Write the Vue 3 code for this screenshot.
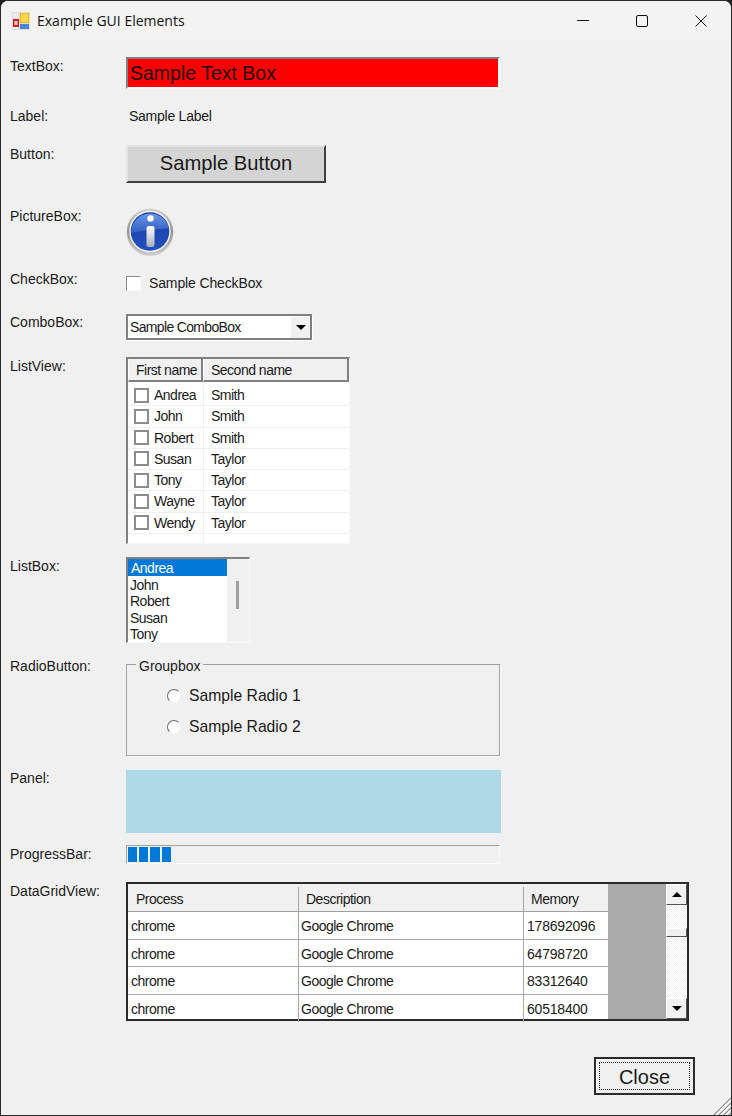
<script setup>
const people = [
  { first: 'Andrea', second: 'Smith' },
  { first: 'John', second: 'Smith' },
  { first: 'Robert', second: 'Smith' },
  { first: 'Susan', second: 'Taylor' },
  { first: 'Tony', second: 'Taylor' },
  { first: 'Wayne', second: 'Taylor' },
  { first: 'Wendy', second: 'Taylor' },
]
const listItems = people.slice(0, 5).map(p => p.first)
const processes = [
  { name: 'chrome', desc: 'Google Chrome', mem: 178692096 },
  { name: 'chrome', desc: 'Google Chrome', mem: 64798720 },
  { name: 'chrome', desc: 'Google Chrome', mem: 83312640 },
  { name: 'chrome', desc: 'Google Chrome', mem: 60518400 },
]
const progressBlocks = 4
</script>

<template>
  <div class="window">
    <header class="titlebar">
      <svg class="app-icon" width="18" height="18" viewBox="0 0 18 18">
        <rect width="18" height="18" fill="#dcdcdc" />
        <rect x="1" y="1" width="5" height="5" fill="#ececec" />
        <rect x="1" y="15" width="5" height="2" fill="#f4f4f4" />
        <rect x="1" y="7" width="6" height="8" fill="#d42020" />
        <rect x="2.5" y="9" width="3" height="4" fill="#f6d0c8" />
        <rect x="8" y="1" width="9" height="10" fill="#f2b705" />
        <rect x="9" y="2" width="7" height="8" fill="#ffd84a" />
        <rect x="8" y="12" width="9" height="5" fill="#4a86d8" />
      </svg>
      <span class="title">Example GUI Elements</span>
      <div class="caption-btns">
        <svg width="14" height="14" viewBox="0 0 14 14"><path d="M1 6.5h12" stroke="#111" fill="none" /></svg>
        <svg width="14" height="14" viewBox="0 0 14 14"><rect x="1.5" y="1.5" width="11" height="11" rx="1.5" stroke="#111" fill="none" /></svg>
        <svg width="14" height="14" viewBox="0 0 14 14"><path d="M1.5 1.5l11 11M12.5 1.5l-11 11" stroke="#111" fill="none" /></svg>
      </div>
    </header>

    <main class="form">
      <div class="row r-textbox">
        <span class="lbl">TextBox:</span>
        <div class="textbox">Sample Text Box</div>
      </div>

      <div class="row r-label">
        <span class="lbl">Label:</span>
        <span class="sample-label">Sample Label</span>
      </div>

      <div class="row r-button">
        <span class="lbl">Button:</span>
        <button class="sample-btn">Sample Button</button>
      </div>

      <div class="row r-picture">
        <span class="lbl">PictureBox:</span>
        <svg class="info" width="48" height="48" viewBox="0 0 48 48">
          <defs>
            <linearGradient id="ring" x1="0" y1="0" x2="0" y2="1">
              <stop offset="0" stop-color="#d4d4d4" />
              <stop offset="0.5" stop-color="#8f8f8f" />
              <stop offset="1" stop-color="#c8c8c8" />
            </linearGradient>
            <linearGradient id="ball" x1="0" y1="0" x2="0" y2="1">
              <stop offset="0" stop-color="#1c3fa6" />
              <stop offset="1" stop-color="#2250be" />
            </linearGradient>
            <linearGradient id="gloss" x1="0" y1="0" x2="0" y2="1">
              <stop offset="0" stop-color="#6b97e6" />
              <stop offset="1" stop-color="#2f5cc0" />
            </linearGradient>
            <linearGradient id="stem" x1="0" y1="0" x2="0" y2="1">
              <stop offset="0" stop-color="#ffffff" />
              <stop offset="1" stop-color="#a8aebc" />
            </linearGradient>
          </defs>
          <circle cx="24" cy="24.5" r="23.5" fill="#000" opacity="0.14" />
          <circle cx="24" cy="23.5" r="23" fill="url(#ring)" />
          <circle cx="24" cy="23.5" r="20.8" fill="#f2f2f2" />
          <circle cx="24" cy="23.5" r="19.3" fill="url(#ball)" />
          <path d="M5 25A19.3 19.3 0 0 1 43 20C33 21 22 22 5 25Z" fill="url(#gloss)" />
          <circle cx="24.5" cy="10.5" r="3.2" fill="#fff" />
          <rect x="20.5" y="18" width="8" height="21" rx="2.5" fill="url(#stem)" />
        </svg>
      </div>

      <div class="row r-check">
        <span class="lbl">CheckBox:</span>
        <label class="sample-check"><span class="check-box"></span>Sample CheckBox</label>
      </div>

      <div class="row r-combo">
        <span class="lbl">ComboBox:</span>
        <div class="combo">
          <span class="combo-text">Sample ComboBox</span>
          <span class="combo-btn"><i class="arrow-down"></i></span>
        </div>
      </div>

      <div class="row r-listview">
        <span class="lbl">ListView:</span>
        <div class="listview">
          <div class="lv-head">
            <span class="lv-h1">First name</span>
            <span class="lv-h2">Second name</span>
          </div>
          <div v-for="p in people" :key="p.first" class="lv-row">
            <span class="lv-c1"><i class="lv-check"></i>{{ p.first }}</span>
            <span class="lv-c2">{{ p.second }}</span>
          </div>
          <div class="lv-row lv-empty">
            <span class="lv-c1"></span>
            <span class="lv-c2"></span>
          </div>
        </div>
      </div>

      <div class="row r-listbox">
        <span class="lbl">ListBox:</span>
        <div class="listbox">
          <ul class="lb-items">
            <li v-for="(it, i) in listItems" :key="it" :class="{ selected: i === 0 }">{{ it }}</li>
          </ul>
          <div class="lb-scroll"><i class="lb-thumb"></i></div>
        </div>
      </div>

      <div class="row r-radio">
        <span class="lbl">RadioButton:</span>
        <fieldset class="group">
          <legend>Groupbox</legend>
          <label class="radio"><i class="radio-dot"></i>Sample Radio 1</label>
          <label class="radio"><i class="radio-dot"></i>Sample Radio 2</label>
        </fieldset>
      </div>

      <div class="row r-panel">
        <span class="lbl">Panel:</span>
        <div class="panel"></div>
      </div>

      <div class="row r-progress">
        <span class="lbl">ProgressBar:</span>
        <div class="progress">
          <i v-for="n in progressBlocks" :key="n" class="block"></i>
        </div>
      </div>

      <div class="row r-grid">
        <span class="lbl">DataGridView:</span>
        <div class="dgv">
          <div class="dgv-table">
            <div class="dgv-head">
              <span class="col1">Process</span>
              <span class="col2">Description</span>
              <span class="col3">Memory</span>
            </div>
            <div v-for="(p, i) in processes" :key="i" class="dgv-row">
              <span class="col1">{{ p.name }}</span>
              <span class="col2">{{ p.desc }}</span>
              <span class="col3 num">{{ p.mem }}</span>
            </div>
          </div>
          <div class="dgv-empty"></div>
          <div class="dgv-scroll">
            <span class="sb-btn"><i class="arrow-up"></i></span>
            <div class="sb-track"><i class="sb-thumb"></i></div>
            <span class="sb-btn"><i class="arrow-down"></i></span>
          </div>
        </div>
      </div>

      <div class="footer">
        <button class="close-btn"><span class="focus-rect">Close</span></button>
      </div>
    </main>

    <svg class="grip" width="18" height="18" viewBox="0 0 18 18">
      <path d="M1 18L18 1M6 18L18 6M11 18l7-7M16 18l2-2" stroke="#8a8a8a" stroke-width="1.2" fill="none" />
      <path d="M2.5 18L18 2.5M7.5 18L18 7.5M12.5 18l5.5-5.5" stroke="#fff" stroke-width="1" fill="none" />
    </svg>
  </div>
</template>

<style>
html, body {
  margin: 0;
  background: #202020;
  overflow: hidden;
}
</style>

<style scoped>
* {
  box-sizing: border-box;
}

.window {
  position: relative;
  width: 732px;
  height: 1116px;
  background: #f0f0f0;
  border: 1px solid #2a2a2a;
  border-radius: 8px 8px 0 0;
  overflow: hidden;
  font-family: "Liberation Sans", Arial, sans-serif;
  font-size: 14px;
  color: #1a1a1a;
}

.titlebar {
  display: flex;
  align-items: center;
  height: 39px;
  padding-left: 11px;
  background: #f3f3f3;
}

.app-icon {
  margin-right: 7px;
}

.title {
  font-family: "Open Sans", sans-serif;
  font-size: 14px;
  color: #111;
}

.caption-btns {
  display: flex;
  gap: 45px;
  margin-left: auto;
  margin-right: 23px;
}

.form {
  padding-left: 9px;
}

.row {
  display: flex;
}

.lbl {
  flex: none;
  width: 116px;
  line-height: 16px;
}

.r-textbox .lbl,
.r-button .lbl,
.r-listview .lbl,
.r-listbox .lbl,
.r-progress .lbl,
.r-grid .lbl {
  padding-top: 1px;
}

.r-textbox { margin-top: 17px; }
.r-label { margin-top: 19px; }
.r-button { margin-top: 21px; }
.r-picture { margin-top: 25px; }
.r-check { margin-top: 15px; }
.r-combo { margin-top: 23px; }
.r-listview { margin-top: 17px; }
.r-listbox { margin-top: 13px; }
.r-radio { margin-top: 15px; }
.r-panel { margin-top: 14px; }
.r-progress { margin-top: 12px; }
.r-grid { margin-top: 18px; }

.textbox {
  width: 374px;
  height: 32px;
  padding-left: 2px;
  background: #ff0000;
  border: 2px solid #808080;
  border-right-color: #f8f8f8;
  border-bottom-color: #f8f8f8;
  font-size: 19.5px;
  line-height: 28px;
  color: #200000;
}

.sample-label {
  padding-left: 3px;
  letter-spacing: -0.25px;
  line-height: 16px;
}

.sample-btn {
  width: 200px;
  height: 38px;
  padding: 0 0 2px;
  background: #d4d4d4;
  border: 2px solid #d4d4d4;
  border-top-color: #e4e4e4;
  border-left-color: #e4e4e4;
  border-right-color: #404040;
  border-bottom-color: #404040;
  font-family: inherit;
  font-size: 20.2px;
  color: #1a1a1a;
}

.sample-check {
  display: flex;
  align-items: center;
  margin-top: 4px;
  letter-spacing: -0.13px;
  line-height: 16px;
}

.check-box {
  width: 15px;
  height: 15px;
  margin-right: 8px;
  background: #fff;
  border: 1px solid #8a8a8a;
  border-right-color: #f8f8f8;
  border-bottom-color: #f8f8f8;
}

.combo {
  display: flex;
  align-items: center;
  width: 186px;
  height: 26px;
  background: #fff;
  border: 2px solid #808080;
  box-shadow: 1px 1px 0 #fff;
}

.combo-text {
  flex: 1;
  padding: 0 0 1px 2px;
  letter-spacing: -0.66px;
}

.combo-btn {
  display: flex;
  align-items: center;
  justify-content: center;
  width: 20px;
  height: 100%;
  background: #f0f0f0;
  border-left: 1px solid #fff;
  border-top: 1px solid #fff;
}

.arrow-down {
  width: 0;
  height: 0;
  border-left: 5px solid transparent;
  border-right: 5px solid transparent;
  border-top: 5px solid #000;
}

.arrow-up {
  width: 0;
  height: 0;
  border-left: 5px solid transparent;
  border-right: 5px solid transparent;
  border-bottom: 5px solid #000;
}

.listview {
  width: 224px;
  height: 187px;
  background: #fff;
  border: 2px solid #808080;
  border-right: 1px solid #f8f8f8;
  border-bottom: 1px solid #f8f8f8;
  letter-spacing: -0.5px;
}

.lv-head {
  display: flex;
  height: 26px;
  background: linear-gradient(#f0f0f0 23px, #fff 23px);
}

.lv-h1,
.lv-h2 {
  height: 23px;
  line-height: 23px;
  padding-left: 7px;
  white-space: nowrap;
  border-right: 2px solid #808080;
  border-bottom: 2px solid #808080;
  border-left: 1px solid #fff;
}

.lv-h1 { width: 75px; }
.lv-h2 { width: 146px; }

.lv-row {
  display: flex;
  height: 21.25px;
  line-height: 20px;
  border-bottom: 1px solid #f0f0f0;
}

.lv-empty {
  height: 9px;
  border-bottom: none;
}

.lv-c1 {
  display: flex;
  align-items: center;
  width: 76px;
  padding-left: 6px;
  border-right: 1px solid #f0f0f0;
}

.lv-c2 {
  padding-left: 7px;
}

.lv-check {
  flex: none;
  width: 15px;
  height: 15px;
  margin-right: 5px;
  background: #fff;
  border: 2px solid #8c8c8c;
}

.listbox {
  display: flex;
  width: 124px;
  height: 86px;
  background: #f0f0f0;
  border: 2px solid #808080;
  border-right: 1px solid #f8f8f8;
  border-bottom: 1px solid #f8f8f8;
  letter-spacing: -0.5px;
}

.lb-items {
  width: 99px;
  margin: 0;
  padding: 0;
  list-style: none;
  background: #fff;
  overflow: hidden;
}

.lb-items li {
  height: 16.3px;
  padding-left: 2px;
  line-height: 19px;
}

.lb-items li.selected {
  height: 17px;
  padding-left: 3px;
  background: #0078d7;
  color: #fff;
}

.lb-scroll {
  flex: 1;
  padding: 22px 0 0 9px;
}

.lb-thumb {
  display: block;
  width: 3px;
  height: 28px;
  background: #a0a0a0;
}

.group {
  width: 374px;
  height: 102px;
  margin: -4px 0 0;
  padding: 0 0 0 41px;
  border: 1px solid #a0a0a0;
  box-shadow: 1px 1px 0 #fff;
}

.group legend {
  margin-left: -32px;
  padding: 4px 3px 0;
  line-height: 16px;
}

.radio {
  display: flex;
  align-items: center;
  height: 16px;
  margin-top: 14px;
  font-size: 15.7px;
  line-height: 16px;
}

.radio + .radio {
  margin-top: 15px;
}

.radio-dot {
  width: 14px;
  height: 14px;
  margin-right: 8px;
  margin-left: -1px;
  border-radius: 50%;
  background: #fff;
  border: 1px solid #6e6e6e;
  border-right-color: #f4f4f4;
  border-bottom-color: #f4f4f4;
}

.panel {
  width: 375px;
  height: 63px;
  background: #add8e6;
}

.progress {
  display: flex;
  gap: 2px;
  width: 374px;
  height: 19px;
  padding: 1px 1px;
  background: #f0f0f0;
  border: 1px solid #a0a0a0;
  border-right-color: #fafafa;
  border-bottom-color: #fafafa;
}

.block {
  width: 9.2px;
  height: 15px;
  background: #0078d7;
}

.dgv {
  display: flex;
  width: 563px;
  height: 139px;
  background: #ababab;
  border: 2px solid #2a2a2a;
  letter-spacing: -0.5px;
}

.dgv-table {
  width: 480px;
  flex: none;
  background: #fff;
}

.dgv-head,
.dgv-row {
  display: flex;
}

.dgv-head {
  height: 28px;
  padding-top: 3px;
  background: #f0f0f0;
  border-bottom: 1px solid #a0a0a0;
  line-height: 24px;
}

.dgv-row {
  height: 27.5px;
  line-height: 28px;
  border-bottom: 1px solid #a8a8a8;
}

.dgv-row:last-child {
  border-bottom: none;
}

.col1 { width: 170px; padding-left: 3px; }
.col2 { width: 225px; padding-left: 2px; border-left: 1px solid #a8a8a8; }
.col3 { width: 85px; padding-left: 3px; border-left: 1px solid #a8a8a8; }
.num { letter-spacing: -0.2px; }
.dgv-head .col1 { padding-left: 8px; }
.dgv-head .col2 { padding-left: 7px; }
.dgv-head .col3 { padding-left: 7px; }

.dgv-empty {
  width: 58px;
  flex: none;
}

.dgv-scroll {
  flex: 1;
  display: flex;
  flex-direction: column;
}

.sb-btn {
  display: flex;
  align-items: center;
  justify-content: center;
  height: 21px;
  background: #f0f0f0;
  border: 1px solid #fff;
  border-right-color: #555;
  border-bottom-color: #555;
}

.sb-track {
  flex: 1;
  padding-top: 23px;
  background: repeating-conic-gradient(#f0f0f0 0 25%, #fff 0 50%) 0 0 / 2px 2px;
}

.sb-thumb {
  display: block;
  height: 9px;
  background: #f0f0f0;
  border: 1px solid #fff;
  border-right-color: #555;
  border-bottom-color: #555;
}

.footer {
  display: flex;
  justify-content: flex-end;
  margin-top: 36px;
  padding-right: 36px;
}

.close-btn {
  width: 101px;
  height: 38px;
  padding: 3px;
  background: #f0f0f0;
  border: 2px solid #2a2a2a;
  box-shadow: inset 1px 1px 0 #fff;
  font-family: inherit;
  font-size: 20px;
  color: #1a1a1a;
}

.focus-rect {
  display: block;
  height: 100%;
  line-height: 28px;
  border: 1px dotted #222;
}

.grip {
  position: absolute;
  right: 0;
  bottom: 0;
}
</style>
